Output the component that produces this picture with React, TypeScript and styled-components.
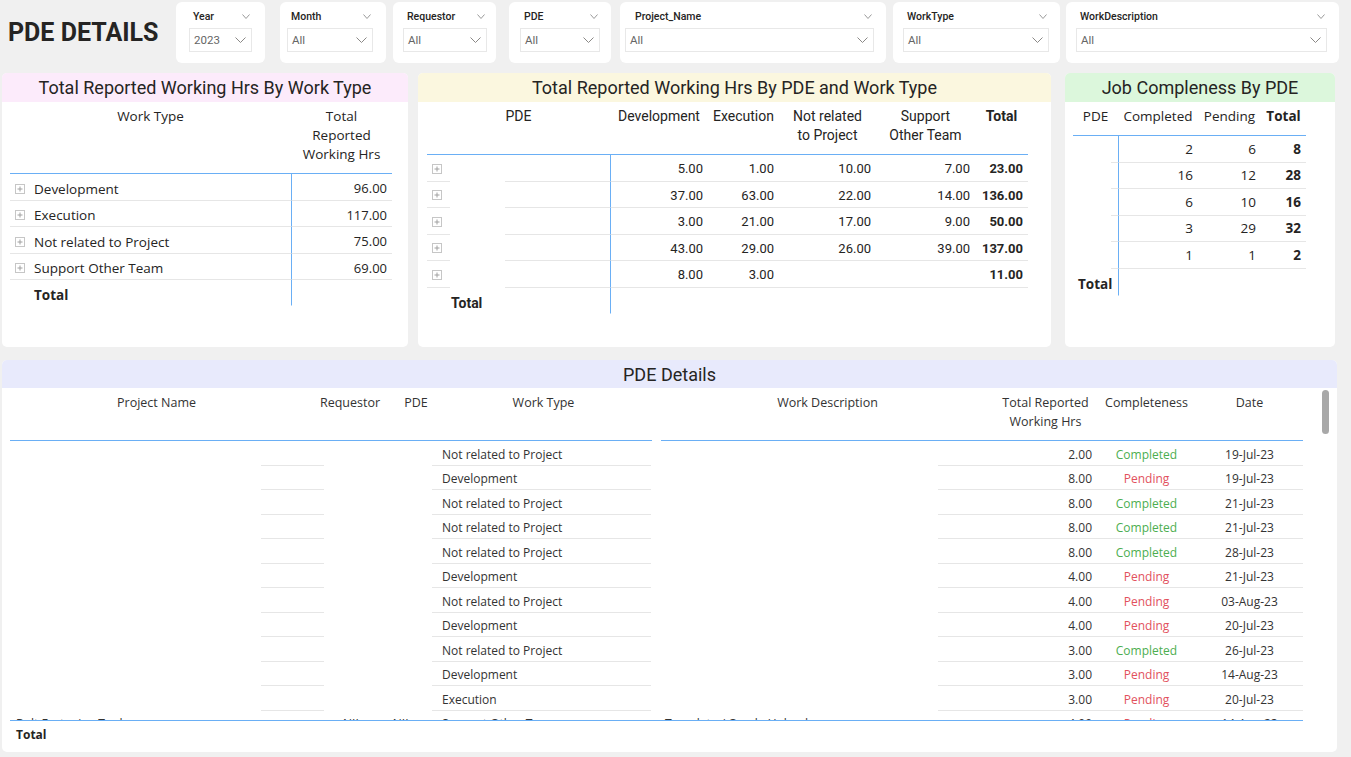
import React from "react";
import styled, { createGlobalStyle } from "styled-components";

const DIN = `"Roboto", "Liberation Sans", sans-serif`;
const SEGOE = `"Open Sans", "Noto Sans", sans-serif`;
const BLUE = "#6aaff5";
const SEP = "#e6e6e6";
const INK = "#252423";

const GlobalStyle = createGlobalStyle`
  html, body { margin: 0; padding: 0; background: #f0f0f0; }
  body { font-family: ${SEGOE}; color: ${INK}; }
  * { box-sizing: border-box; }
`;

const Page = styled.div`
  width: 1351px;
  height: 757px;
  overflow: hidden;
  display: flex;
  flex-direction: column;
  background: #f0f0f0;
`;

/* ---------- top bar ---------- */
const TopBar = styled.div`
  display: flex;
  align-items: flex-start;
  padding-top: 2px;
  height: 73px;
  flex: none;
`;

const PageTitle = styled.h1`
  margin: 0;
  width: 176px;
  height: 61px;
  padding-left: 8px;
  display: flex;
  align-items: center;
  font-family: ${DIN};
  font-weight: 700;
  font-size: 25px;
  color: ${INK};
`;

const Slicer = styled.div<{ $w: number; $ml: number; $pl: number; $pr: number }>`
  width: ${(p) => p.$w}px;
  margin-left: ${(p) => p.$ml}px;
  height: 61px;
  background: #fff;
  border-radius: 6px;
  padding: 4px ${(p) => p.$pr}px 0 ${(p) => p.$pl}px;
  display: flex;
  flex-direction: column;
`;

const SlicerHead = styled.div<{ $li: number }>`
  height: 20px;
  display: flex;
  align-items: center;
  justify-content: space-between;
  padding-left: ${(p) => p.$li}px;
  padding-right: 2px;
  font-family: ${DIN};
  font-size: 10.5px;
  font-weight: 500;
  color: ${INK};
`;

const DropBox = styled.div`
  margin-top: 2px;
  height: 24px;
  border: 1px solid #e8e8e8;
  display: flex;
  align-items: center;
  justify-content: space-between;
  padding: 0 5px 0 4px;
  font-family: ${DIN};
  font-size: 11.5px;
  color: #666;
`;

const Chevron = ({ w, h, c }: { w: number; h: number; c: string }) => (
  <svg width={w} height={h} viewBox={`0 0 ${w} ${h}`}>
    <polyline points={`0.5,0.5 ${w / 2},${h - 0.5} ${w - 0.5},0.5`} fill="none" stroke={c} strokeWidth="1" />
  </svg>
);

type SlicerDef = { label: string; value: string; w: number; ml: number; pl: number; pr: number; li?: number };

const slicers: SlicerDef[] = [
  { label: "Year", value: "2023", w: 89, ml: 0, pl: 13, pr: 13 },
  { label: "Month", value: "All", w: 106, ml: 15, pl: 7, pr: 13 },
  { label: "Requestor", value: "All", w: 103, ml: 7, pl: 10, pr: 9 },
  { label: "PDE", value: "All", w: 102, ml: 13, pl: 11, pr: 11 },
  { label: "Project_Name", value: "All", w: 266, ml: 9, pl: 5, pr: 12, li: 10 },
  { label: "WorkType", value: "All", w: 167, ml: 7, pl: 10, pr: 11 },
  { label: "WorkDescription", value: "All", w: 273, ml: 6, pl: 10, pr: 12 },
];

/* ---------- panels ---------- */
const PanelRow = styled.div`
  display: flex;
  padding-left: 2px;
  height: 274px;
  flex: none;
`;

const BottomRow = styled.div`
  display: flex;
  padding-left: 2px;
  margin-top: 13px;
  flex: none;
`;

const Panel = styled.section<{ $w: number; $ml?: number; $h: number }>`
  width: ${(p) => p.$w}px;
  height: ${(p) => p.$h}px;
  margin-left: ${(p) => p.$ml ?? 0}px;
  background: #fff;
  border-radius: 5px;
  overflow: hidden;
  display: flex;
  flex-direction: column;
`;

const PanelHead = styled.div<{ $bg: string; $h: number }>`
  height: ${(p) => p.$h}px;
  flex: none;
  background: ${(p) => p.$bg};
  display: flex;
  align-items: center;
  justify-content: center;
  font-family: ${DIN};
  font-size: 18px;
  color: ${INK};
`;

const Grid = styled.div<{ $cols: string; $ml: number; $font: string; $size: number; $color?: string }>`
  display: grid;
  grid-template-columns: ${(p) => p.$cols};
  align-content: start;
  margin-left: ${(p) => p.$ml}px;
  font-family: ${(p) => p.$font};
  font-size: ${(p) => p.$size}px;
  color: ${(p) => p.$color ?? INK};
`;

const HeadCell = styled.div<{ $span?: number; $h: number; $bold?: boolean; $noLine?: boolean }>`
  grid-column: span ${(p) => p.$span ?? 1};
  height: ${(p) => p.$h}px;
  padding-top: 5px;
  line-height: 19px;
  text-align: center;
  white-space: nowrap;
  font-weight: ${(p) => (p.$bold ? 700 : 400)};
  border-bottom: 1px solid ${(p) => (p.$noLine ? "transparent" : BLUE)};
`;

type Align = "left" | "right" | "center";

const Cell = styled.div<{
  $span?: number;
  $h: number;
  $align?: Align;
  $sep?: boolean;
  $vline?: boolean;
  $bold?: boolean;
  $pl?: number;
  $pr?: number;
  $pt?: number;
  $fs?: number;
  $color?: string;
}>`
  grid-column: span ${(p) => p.$span ?? 1};
  height: ${(p) => p.$h}px;
  display: flex;
  align-items: center;
  justify-content: ${(p) => (p.$align === "right" ? "flex-end" : p.$align === "center" ? "center" : "flex-start")};
  padding-left: ${(p) => p.$pl ?? 0}px;
  padding-right: ${(p) => p.$pr ?? 0}px;
  padding-top: ${(p) => p.$pt ?? 0}px;
  border-bottom: 1px solid ${(p) => (p.$sep ? SEP : "transparent")};
  border-left: ${(p) => (p.$vline ? `1px solid ${BLUE}` : "none")};
  font-weight: ${(p) => (p.$bold ? 700 : 400)};
  ${(p) => (p.$fs ? `font-size: ${p.$fs}px;` : "")}
  color: ${(p) => p.$color ?? "inherit"};
  white-space: nowrap;
  overflow: hidden;
`;

const ExpandIcon = () => (
  <svg width="10" height="10" viewBox="0 0 10 10" style={{ flex: "none" }}>
    <rect x="0.5" y="0.5" width="9" height="9" fill="#fff" stroke="#c6c6c6" />
    <line x1="2.5" y1="5" x2="7.5" y2="5" stroke="#a0a0a0" />
    <line x1="5" y1="2.5" x2="5" y2="7.5" stroke="#a0a0a0" />
  </svg>
);

const Label = styled.span`
  margin-left: 9px;
`;

/* ---------- data ---------- */
const workTypes = [
  ["Development", "96.00"],
  ["Execution", "117.00"],
  ["Not related to Project", "75.00"],
  ["Support Other Team", "69.00"],
];

const pdeMatrix = [
  ["5.00", "1.00", "10.00", "7.00", "23.00"],
  ["37.00", "63.00", "22.00", "14.00", "136.00"],
  ["3.00", "21.00", "17.00", "9.00", "50.00"],
  ["43.00", "29.00", "26.00", "39.00", "137.00"],
  ["8.00", "3.00", "", "", "11.00"],
];

const jobs = [
  ["2", "6", "8"],
  ["16", "12", "28"],
  ["6", "10", "16"],
  ["3", "29", "32"],
  ["1", "1", "2"],
];

type Detail = { wt: string; hrs: string; done: boolean; date: string };
const details: Detail[] = [
  { wt: "Not related to Project", hrs: "2.00", done: true, date: "19-Jul-23" },
  { wt: "Development", hrs: "8.00", done: false, date: "19-Jul-23" },
  { wt: "Not related to Project", hrs: "8.00", done: true, date: "21-Jul-23" },
  { wt: "Not related to Project", hrs: "8.00", done: true, date: "21-Jul-23" },
  { wt: "Not related to Project", hrs: "8.00", done: true, date: "28-Jul-23" },
  { wt: "Development", hrs: "4.00", done: false, date: "21-Jul-23" },
  { wt: "Not related to Project", hrs: "4.00", done: false, date: "03-Aug-23" },
  { wt: "Development", hrs: "4.00", done: false, date: "20-Jul-23" },
  { wt: "Not related to Project", hrs: "3.00", done: true, date: "26-Jul-23" },
  { wt: "Development", hrs: "3.00", done: false, date: "14-Aug-23" },
  { wt: "Execution", hrs: "3.00", done: false, date: "20-Jul-23" },
];

/* ---------- bottom table ---------- */
const DetailArea = styled.div`
  display: flex;
  flex: 1;
`;

const DetailTable = styled.div`
  width: 1293px;
  margin-left: 8px;
  display: flex;
  flex-direction: column;
  font-family: ${SEGOE};
  font-size: 12px;
  color: #333;
`;

const DetailBody = styled.div`
  height: 279px;
  overflow: hidden;
`;

const DetailTotal = styled.div`
  height: 25px;
  border-top: 1px solid ${BLUE};
  display: flex;
  align-items: center;
  padding-left: 6px;
  padding-top: 2px;
  font-weight: 700;
  color: ${INK};
`;

const ScrollThumb = styled.div`
  width: 7px;
  height: 44px;
  margin: 2px 0 0 19px;
  border-radius: 4px;
  background: #a8a8a8;
`;

const BodyCols = "251px 63px 108px 219px 287px 159px 99px 107px";
const HeadCols = "293px 94px 38px 217px 9px 333px 103px 99px 107px";

const GREEN = "#4cae50";
const RED = "#e2515d";
const RH = 24.5;
const PH = 26.5;

export default function App() {
  return (
    <Page>
      <GlobalStyle />
      <TopBar>
        <PageTitle>PDE DETAILS</PageTitle>
        {slicers.map((s) => (
          <Slicer key={s.label} $w={s.w} $ml={s.ml} $pl={s.pl} $pr={s.pr}>
            <SlicerHead $li={s.li ?? 4}>
              <span>{s.label}</span>
              <Chevron w={8} h={5} c="#9a9a9a" />
            </SlicerHead>
            <DropBox>
              <span>{s.value}</span>
              <Chevron w={11} h={6} c="#8a8886" />
            </DropBox>
          </Slicer>
        ))}
      </TopBar>

      <PanelRow>
        {/* Panel 1 */}
        <Panel $w={406} $h={274}>
          <PanelHead $bg="#fcebfb" $h={29}>Total Reported Working Hrs By Work Type</PanelHead>
          <Grid $cols="281px 101px" $ml={8} $font={SEGOE} $size={13.5}>
            <HeadCell $h={72}>Work Type</HeadCell>
            <HeadCell $h={72}>
              Total
              <br />
              Reported
              <br />
              Working Hrs
            </HeadCell>
            {workTypes.map(([name, v]) => (
              <React.Fragment key={name}>
                <Cell $h={PH} $sep $pl={5} $pt={4}>
                  <ExpandIcon />
                  <Label>{name}</Label>
                </Cell>
                <Cell $h={PH} $sep $vline $align="right" $pr={5} $pt={3} $fs={13}>
                  {v}
                </Cell>
              </React.Fragment>
            ))}
            <Cell $h={26} $bold $pl={24} $pt={4}>
              Total
            </Cell>
            <Cell $h={26} $vline />
          </Grid>
        </Panel>

        {/* Panel 2 */}
        <Panel $w={633} $ml={10} $h={274}>
          <PanelHead $bg="#fbf7df" $h={29}>Total Reported Working Hrs By PDE and Work Type</PanelHead>
          <Grid $cols="23px 55px 105px 98px 71px 97px 99px 53px" $ml={9} $font={DIN} $size={14}>
            <HeadCell $h={53} $span={3}>PDE</HeadCell>
            <HeadCell $h={53}>Development</HeadCell>
            <HeadCell $h={53}>Execution</HeadCell>
            <HeadCell $h={53}>
              Not related
              <br />
              to Project
            </HeadCell>
            <HeadCell $h={53}>
              Support
              <br />
              Other Team
            </HeadCell>
            <HeadCell $h={53} $bold>
              Total
            </HeadCell>
            {pdeMatrix.map((r, i) => (
              <React.Fragment key={i}>
                <Cell $h={PH} $sep $pl={5} $pt={2}>
                  <ExpandIcon />
                </Cell>
                <Cell $h={PH} />
                <Cell $h={PH} $sep />
                {r.map((v, j) => (
                  <Cell
                    key={j}
                    $h={PH}
                    $sep
                    $vline={j === 0}
                    $align="right"
                    $pr={5}
                    $pt={2}
                    $fs={13}
                    $bold={j === 4}
                  >
                    {v}
                  </Cell>
                ))}
              </React.Fragment>
            ))}
            <Cell $h={26} $span={3} $bold $pl={24} $pt={6}>
              Total
            </Cell>
            <Cell $h={26} $vline $span={5} />
          </Grid>
        </Panel>

        {/* Panel 3 */}
        <Panel $w={270} $ml={14} $h={274}>
          <PanelHead $bg="#dcf7dc" $h={29}>Job Compleness By PDE</PanelHead>
          <Grid $cols="38px 7px 80px 63px 45px" $ml={8} $font={SEGOE} $size={13.5}>
            <HeadCell $h={34} $span={2}>PDE</HeadCell>
            <HeadCell $h={34}>Completed</HeadCell>
            <HeadCell $h={34}>Pending</HeadCell>
            <HeadCell $h={34} $bold>
              Total
            </HeadCell>
            {jobs.map((r, i) => (
              <React.Fragment key={i}>
                <Cell $h={PH} />
                <Cell $h={PH} $sep />
                {r.map((v, j) => (
                  <Cell key={j} $h={PH} $sep $vline={j === 0} $align="right" $pr={5} $bold={j === 2}>
                    {v}
                  </Cell>
                ))}
              </React.Fragment>
            ))}
            <Cell $h={27} $span={2} $bold $pl={5} $pt={4}>
              Total
            </Cell>
            <Cell $h={27} $vline $span={3} />
          </Grid>
        </Panel>
      </PanelRow>

      <BottomRow>
        <Panel $w={1335} $h={392}>
          <PanelHead $bg="#e8eafc" $h={28}>PDE Details</PanelHead>
          <DetailArea>
            <DetailTable>
              <Grid $cols={HeadCols} $ml={0} $font={SEGOE} $size={12.5} $color="#333">
                <HeadCell $h={53}>Project Name</HeadCell>
                <HeadCell $h={53}>Requestor</HeadCell>
                <HeadCell $h={53}>PDE</HeadCell>
                <HeadCell $h={53}>Work Type</HeadCell>
                <HeadCell $h={53} $noLine />
                <HeadCell $h={53}>Work Description</HeadCell>
                <HeadCell $h={53}>
                  Total Reported
                  <br />
                  Working Hrs
                </HeadCell>
                <HeadCell $h={53}>Completeness</HeadCell>
                <HeadCell $h={53}>Date</HeadCell>
              </Grid>
              <DetailBody>
                <Grid $cols={BodyCols} $ml={0} $font={SEGOE} $size={12} $color="#333">
                  {details.map((d, i) => (
                    <React.Fragment key={i}>
                      <Cell $h={RH} />
                      <Cell $h={RH} $sep />
                      <Cell $h={RH} />
                      <Cell $h={RH} $sep $pl={10} $pt={3}>
                        {d.wt}
                      </Cell>
                      <Cell $h={RH} />
                      <Cell $h={RH} $sep $align="right" $pr={5} $pt={3}>
                        {d.hrs}
                      </Cell>
                      <Cell $h={RH} $sep $align="center" $pt={3} $color={d.done ? GREEN : RED}>
                        {d.done ? "Completed" : "Pending"}
                      </Cell>
                      <Cell $h={RH} $sep $align="center" $pt={3}>
                        {d.date}
                      </Cell>
                    </React.Fragment>
                  ))}
                  <Cell $h={RH} $pl={6} $pt={3}>
                    Bolt Fastening Tool
                  </Cell>
                  <Cell $h={RH} />
                  <Cell $h={RH} $pl={19} $pt={3}>
                    NIL&nbsp;&nbsp;&nbsp;&nbsp;&nbsp;&nbsp;&nbsp;&nbsp;&nbsp;&nbsp;NIL
                  </Cell>
                  <Cell $h={RH} $pl={10} $pt={3}>
                    Support Other Team
                  </Cell>
                  <Cell $h={RH} $pl={14} $pt={3}>
                    Template / Oracle Upload
                  </Cell>
                  <Cell $h={RH} $align="right" $pr={5} $pt={3}>
                    4.00
                  </Cell>
                  <Cell $h={RH} $align="center" $pt={3} $color={RED}>
                    Pending
                  </Cell>
                  <Cell $h={RH} $align="center" $pt={3}>
                    14-Aug-23
                  </Cell>
                </Grid>
              </DetailBody>
              <DetailTotal>Total</DetailTotal>
            </DetailTable>
            <ScrollThumb />
          </DetailArea>
        </Panel>
      </BottomRow>
    </Page>
  );
}
